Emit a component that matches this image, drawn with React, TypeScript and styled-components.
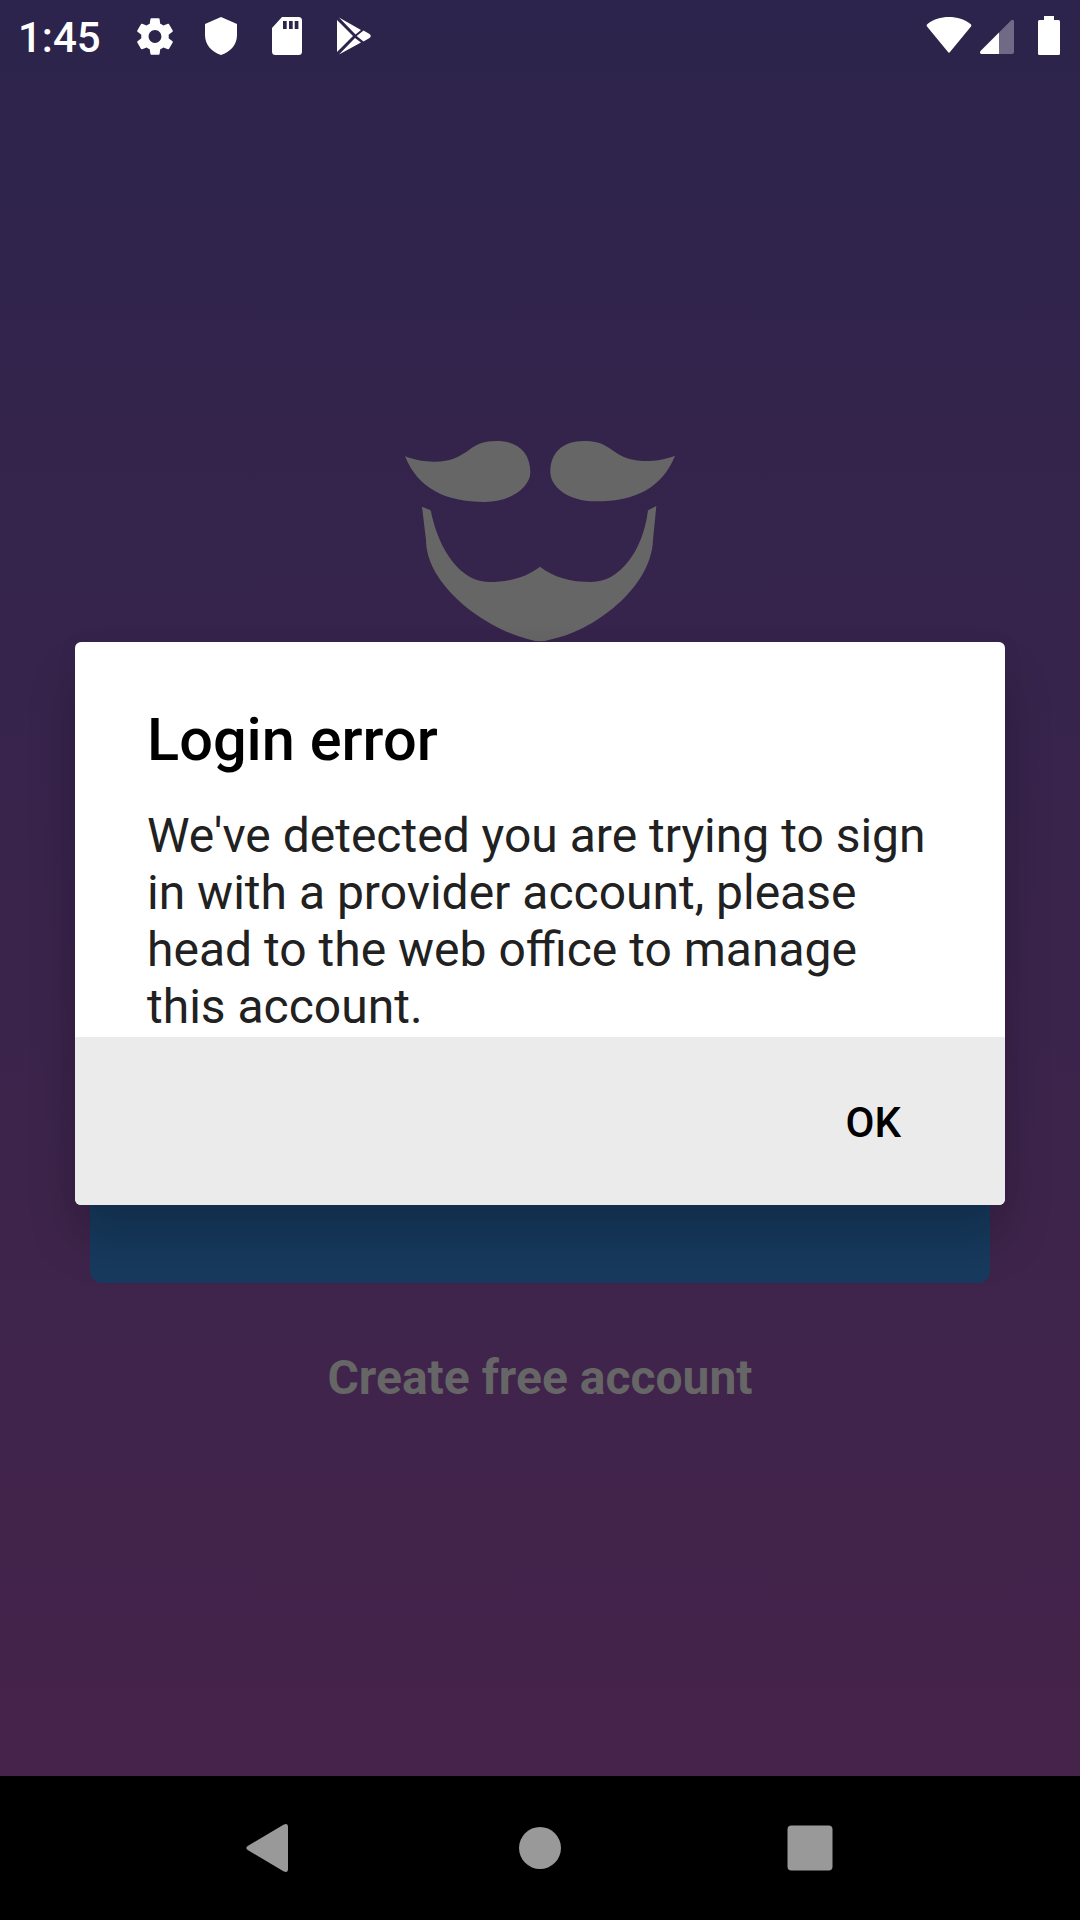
import React from "react";
import styled, { createGlobalStyle } from "styled-components";

const GlobalStyle = createGlobalStyle`
  * { box-sizing: border-box; }
  body { margin: 0; background: #000; font-family: Roboto, "Liberation Sans", sans-serif; }
  svg { display: block; }
`;

const Device = styled.div`
  position: relative;
  width: 1080px;
  height: 1920px;
  display: flex;
  flex-direction: column;
  overflow: hidden;
`;

const Screen = styled.main`
  height: 1776px;
  display: flex;
  flex-direction: column;
  background: linear-gradient(#2c244c, #34244c 26%, #3f244b 75%, #46234b);
`;

const StatusBar = styled.header`
  height: 72px;
  display: flex;
  align-items: center;
  padding: 0 4px 0 18px;
  color: #fff;
`;

const Clock = styled.time`
  width: 115px;
  font-size: 42px;
  font-weight: 500;
  line-height: 72px;
  padding-top: 4px;
`;

const StatusIcons = styled.div<{ $gap: number; $push?: boolean }>`
  display: flex;
  align-items: center;
  gap: ${(p) => p.$gap}px;
  margin-left: ${(p) => (p.$push ? "auto" : "0")};
`;

const Welcome = styled.section`
  display: flex;
  flex-direction: column;
  align-items: center;
  padding-top: 369px;
`;

const LoginButton = styled.button`
  width: 900px;
  height: 132px;
  margin-top: 509px;
  border: 0;
  border-radius: 12px;
  background: #173a5e;
`;

const CreateAccount = styled.a`
  margin-top: 67px;
  color: #666;
  font-size: 48px;
  font-weight: 700;
  line-height: 56px;
  white-space: nowrap;
`;

const Dialog = styled.div`
  position: absolute;
  left: 75px;
  top: 642px;
  width: 930px;
  height: 563px;
  display: flex;
  flex-direction: column;
  overflow: hidden;
  border-radius: 6px;
  background: #fff;
  box-shadow: 0 34px 48px rgba(0, 0, 0, 0.2), 0 0 24px rgba(0, 0, 0, 0.04);
`;

const DialogBody = styled.div`
  height: 395px;
  padding: 63px 72px 0;
`;

const Title = styled.h1`
  margin: 0;
  color: #000;
  font-size: 59.5px;
  font-weight: 500;
  line-height: 70px;
`;

const Message = styled.p`
  margin: 32px 0 0;
  color: #212121;
  font-size: 48px;
  line-height: 57px;
  white-space: nowrap;
`;

const DialogActions = styled.div`
  flex: 1;
  display: flex;
  align-items: center;
  justify-content: flex-end;
  padding-right: 104px;
  background: #ebebeb;
`;

const OkButton = styled.button`
  padding: 4px 0 0;
  border: 0;
  background: none;
  color: #000;
  font: 500 42px/50px Roboto, "Liberation Sans", sans-serif;
`;

const NavigationBar = styled.nav`
  height: 144px;
  display: grid;
  grid-template-columns: repeat(3, 270px);
  justify-content: center;
  place-items: center;
  background: #000;
`;

const lines = [
  "We've detected you are trying to sign",
  "in with a provider account, please",
  "head to the web office to manage",
  "this account.",
];

function Logo() {
  return (
    <svg width="270" height="201" viewBox="45 63 810 603" fill="#666">
      <path d="M45 109C78 121 106 125 130 125C182 126 209 109 238 89C264 71 282 63 320 63C384 63 421 99 421 157C421 200 364 246 285 246C165 246 84 205 45 109Z" />
      <path d="M855 107C822 119 794 123 770 123C714 123 691 107 662 87C636 69 618 63 582 63C518 63 481 98 481 156C481 200 534 244 617 244C738 244 817 202 855 107Z" />
      <path d="M96 260L122 271C147 398 217 486 295 486C360 486 409 471 450 440C491 471 540 486 605 486C687 486 758 397 774 271L799 258L789 360C784 505 607 636 479 659Q450 668 421 659C293 630 109 500 108 360Z" />
    </svg>
  );
}

export default function App() {
  return (
    <>
      <GlobalStyle />
      <Device>
        <Screen>
          <StatusBar>
            <Clock>1:45</Clock>
            <StatusIcons $gap={22}>
              <svg width="44" height="45" viewBox="0 0 24 24" fill="#fff">
                <path d="M19.43 12.98c.04-.32.07-.64.07-.98s-.03-.66-.07-.98l2.11-1.65c.19-.15.24-.42.12-.64l-2-3.46c-.12-.22-.39-.3-.61-.22l-2.49 1c-.52-.4-1.08-.73-1.69-.98l-.38-2.65C14.46 2.18 14.25 2 14 2h-4c-.25 0-.46.18-.49.42l-.38 2.65c-.61.25-1.17.59-1.69.98l-2.49-1c-.23-.09-.49 0-.61.22l-2 3.46c-.13.22-.07.49.12.64l2.11 1.65c-.04.32-.07.65-.07.98s.03.66.07.98l-2.11 1.65c-.19.15-.24.42-.12.64l2 3.46c.12.22.39.3.61.22l2.49-1c.52.4 1.08.73 1.69.98l.38 2.65c.03.24.24.42.49.42h4c.25 0 .46-.18.49-.42l.38-2.65c.61-.25 1.17-.59 1.69-.98l2.49 1c.23.09.49 0 .61-.22l2-3.46c.12-.22.07-.49-.12-.64l-2.11-1.65zM12 15.5c-1.93 0-3.5-1.57-3.5-3.5s1.57-3.5 3.5-3.5 3.5 1.57 3.5 3.5-1.57 3.5-3.5 3.5z" />
              </svg>
              <svg width="44" height="44" viewBox="0 0 44 44" fill="#fff">
                <path d="M22 3L38 10V21C38 31 31 38 22 41C13 38 6 31 6 21V10Z" />
              </svg>
              <svg width="44" height="44" viewBox="0 0 44 44" fill="#fff">
                <path fillRule="evenodd" d="M17 3H33.5Q37 3 37 6.5V37.5Q37 41 33.5 41H10.5Q7 41 7 37.5V14ZM18 7V15H21.7V7ZM24 7V15H27.7V7ZM29.7 7V15H33.4V7Z" />
              </svg>
              <svg width="44" height="44" viewBox="0 0 44 44" fill="#fff">
                <path d="M6 6L22 22L6 38ZM8 3.5L30 16L24.5 20.5ZM8 40.5L24 24L30 28.5ZM25.7 22L32.5 16.5L38.5 20Q41 22 38.5 24L32.5 27.5Z" />
              </svg>
            </StatusIcons>
            <StatusIcons $gap={8} $push>
              <svg width="46" height="44" viewBox="0 0 46 44" fill="#fff">
                <path d="M1.2 10.2C13 .7 33 .7 44.8 10.2Q46 11.2 45 12.5L24.2 37.8Q23 39.8 21.8 37.8L1 12.5Q0 11.2 1.2 10.2Z" />
              </svg>
              <svg width="34" height="44" viewBox="0 0 34 44" fill="#fff">
                <path opacity=".32" d="M19 18.4L31 6.4Q34 4.5 34 8V38Q34 40 32 40H19Z" />
                <path d="M19 18.4V40H2Q-1 40 .5 37Z" />
              </svg>
              <svg width="54" height="44" viewBox="0 0 54 44" fill="#fff">
                <path d="M22 2H32V6H36.5Q38 6 38 7.5V39.5Q38 41 36.5 41H17.5Q16 41 16 39.5V7.5Q16 6 17.5 6H22Z" />
              </svg>
            </StatusIcons>
          </StatusBar>
          <Welcome>
            <Logo />
            <LoginButton aria-label="Log in" />
            <CreateAccount>Create free account</CreateAccount>
          </Welcome>
        </Screen>
        <NavigationBar>
          <svg width="48" height="48" viewBox="0 0 48 48" fill="#999">
            <path d="M1.7 22L37.5 .7Q42 -1.2 42 3V45Q42 49.2 37.5 47.3L1.7 26Q-1 24 1.7 22Z" />
          </svg>
          <svg width="42" height="42" viewBox="0 0 42 42" fill="#999">
            <circle cx="21" cy="21" r="21" />
          </svg>
          <svg width="46" height="46" viewBox="0 0 46 46" fill="#999">
            <rect x=".5" y=".5" width="45" height="45" rx="4" />
          </svg>
        </NavigationBar>
        <Dialog role="alertdialog">
          <DialogBody>
            <Title>Login error</Title>
            <Message>
              {lines.map((line) => (
                <React.Fragment key={line}>
                  {line}
                  <br />
                </React.Fragment>
              ))}
            </Message>
          </DialogBody>
          <DialogActions>
            <OkButton>OK</OkButton>
          </DialogActions>
        </Dialog>
      </Device>
    </>
  );
}
